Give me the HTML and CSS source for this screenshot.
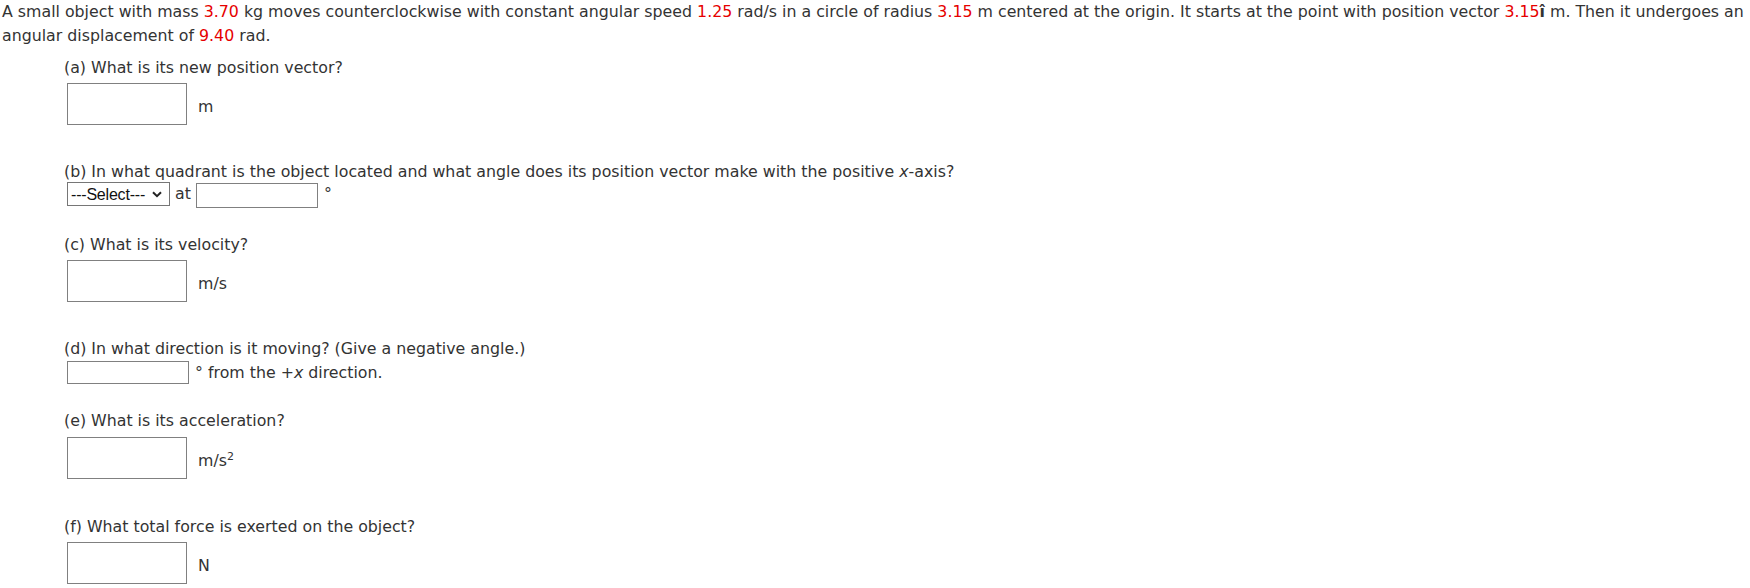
FILE: index.html
```html
<!DOCTYPE html>
<html lang="en">
<head>
<meta charset="utf-8">
<title>Circular motion</title>
<link rel="stylesheet" href="styles.css">
</head>
<body>
<div class="page">
  <p class="intro">A small object with mass <span class="red">3.70</span> kg moves counterclockwise with constant angular speed <span class="red">1.25</span> rad/s in a circle of radius <span class="red">3.15</span> m centered at the origin. It starts at the point with position vector <span class="red">3.15</span><b>î</b> m. Then it undergoes an angular displacement of <span class="red">9.40</span> rad.</p>

  <div class="parts">
    <div class="part part-a">
      <div class="label">(a) What is its new position vector?</div>
      <div class="row">
        <input class="box box-tall" type="text">
        <span class="unit">m</span>
      </div>
    </div>

    <div class="part part-b">
      <div class="label">(b) In what quadrant is the object located and what angle does its position vector make with the positive <i>x</i>-axis?</div>
      <div class="row row-b">
        <span class="sel-wrap">
          <select class="sel">
            <option>---Select---</option>
            <option>first quadrant</option>
            <option>second quadrant</option>
            <option>third quadrant</option>
            <option>fourth quadrant</option>
          </select>
          <svg class="chev" width="10" height="7" viewBox="0 0 10 7"><path d="M1 1.2 L5 5.2 L9 1.2" fill="none" stroke="#222" stroke-width="2"/></svg>
        </span>
        <span class="at">at</span>
        <input class="box box-b" type="text">
        <span class="deg">°</span>
      </div>
    </div>

    <div class="part part-c">
      <div class="label">(c) What is its velocity?</div>
      <div class="row">
        <input class="box box-tall" type="text">
        <span class="unit">m/s</span>
      </div>
    </div>

    <div class="part part-d">
      <div class="label">(d) In what direction is it moving? (Give a negative angle.)</div>
      <div class="row row-d">
        <input class="box box-d" type="text">
        <span class="dir">° from the +<i>x</i> direction.</span>
      </div>
    </div>

    <div class="part part-e">
      <div class="label">(e) What is its acceleration?</div>
      <div class="row">
        <input class="box box-tall" type="text">
        <span class="unit">m/s<sup>2</sup></span>
      </div>
    </div>

    <div class="part part-f">
      <div class="label">(f) What total force is exerted on the object?</div>
      <div class="row">
        <input class="box box-tall" type="text">
        <span class="unit">N</span>
      </div>
    </div>
  </div>
</div>
</body>
</html>
```

FILE: styles.css
```css
html, body {
  margin: 0;
  padding: 0;
  background: #ffffff;
}
body {
  font-family: "DejaVu Sans", Verdana, sans-serif;
  font-size: 15.8px;
  color: #333333;
}
.page {
  padding: 0 4px 0 2px;
}
.intro {
  margin: 0;
  line-height: 24px;
}
.red {
  color: #e60000;
}
.parts {
  padding-left: 62px;
  margin-top: 10px;
}
.label {
  line-height: 20px;
}
.row {
  display: flex;
  align-items: center;
  padding-left: 3px;
}
.box {
  box-sizing: border-box;
  border: 1px solid #808080;
  border-radius: 0;
  background: #fff;
  padding: 0 4px;
  margin: 0;
  font: inherit;
  outline: none;
}
.box-tall {
  width: 120px;
  height: 42px;
}
.box-b {
  width: 122px;
  height: 25px;
  margin-top: 1px;
}
.box-d {
  width: 122px;
  height: 23px;
}
.unit {
  margin-left: 11px;
  padding-top: 6px;
  line-height: 20px;
}
.unit sup {
  font-size: 11px;
  line-height: 0;
  vertical-align: 6px;
}
.part-a .row { margin-top: 5px; }
.part-b { margin-top: 37px; }
.part-b .row { margin-top: 0; }
.part-c { margin-top: 27px; }
.part-c .row { margin-top: 5px; }
.part-d { margin-top: 37px; }
.part-d .row { margin-top: 2px; }
.part-e { margin-top: 27px; }
.part-e .row { margin-top: 6px; }
.part-f { margin-top: 38px; }
.part-f .row { margin-top: 5px; }

.row-b {
  align-items: flex-start;
}
.sel-wrap {
  position: relative;
  display: inline-block;
}
.sel {
  appearance: none;
  -webkit-appearance: none;
  box-sizing: border-box;
  width: 103px;
  height: 24px;
  border: 1px solid #767676;
  border-radius: 0;
  background: #fff;
  color: #111;
  font-family: "Liberation Sans", Arial, sans-serif;
  font-size: 16px;
  letter-spacing: -0.2px;
  padding: 0 0 0 3px;
  margin: 0;
}
.chev {
  position: absolute;
  right: 8px;
  top: 9px;
  pointer-events: none;
}
.at {
  margin-left: 5px;
  line-height: 24px;
}
.row-b .box-b {
  margin-left: 5px;
}
.deg {
  margin-left: 6px;
  line-height: 24px;
}
.dir {
  margin-left: 6px;
  line-height: 20px;
}
```
